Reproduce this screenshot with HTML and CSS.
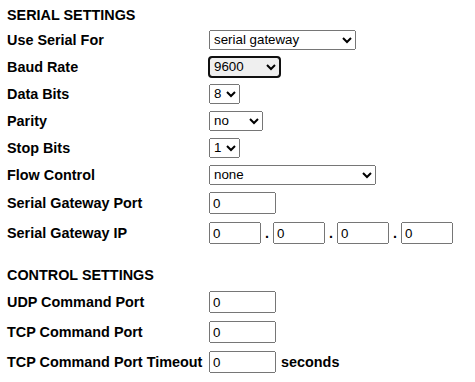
FILE: index.html
```html
<!DOCTYPE html>
<html>
<head>
<meta charset="utf-8">
<link rel="stylesheet" href="styles.css">
</head>
<body>
<form class="page">
  <h2 class="section">SERIAL SETTINGS</h2>
  <div class="row">
    <label class="lbl">Use Serial For</label>
    <select class="sel w-serial"><option>serial gateway</option><option>disabled</option></select>
  </div>
  <div class="row">
    <label class="lbl">Baud Rate</label>
    <select class="sel w-baud focused"><option>9600</option><option>115200</option></select>
  </div>
  <div class="row">
    <label class="lbl">Data Bits</label>
    <select class="sel w-digit"><option>8</option><option>7</option></select>
  </div>
  <div class="row">
    <label class="lbl">Parity</label>
    <select class="sel w-parity"><option>no</option><option>even</option><option>odd</option></select>
  </div>
  <div class="row">
    <label class="lbl">Stop Bits</label>
    <select class="sel w-digit"><option>1</option><option>2</option></select>
  </div>
  <div class="row">
    <label class="lbl">Flow Control</label>
    <select class="sel w-flow"><option>none</option><option>hardware</option></select>
  </div>
  <div class="row tall">
    <label class="lbl">Serial Gateway Port</label>
    <input class="inp w-port" type="text" value="0">
  </div>
  <div class="row tall">
    <label class="lbl">Serial Gateway IP</label>
    <div class="ip">
      <input class="inp w-ip" type="text" value="0"><span class="dot">.</span><input class="inp w-ip" type="text" value="0"><span class="dot">.</span><input class="inp w-ip" type="text" value="0"><span class="dot">.</span><input class="inp w-ip" type="text" value="0">
    </div>
  </div>

  <h2 class="section second">CONTROL SETTINGS</h2>
  <div class="row tall">
    <label class="lbl">UDP Command Port</label>
    <input class="inp w-port" type="text" value="0">
  </div>
  <div class="row tall">
    <label class="lbl">TCP Command Port</label>
    <input class="inp w-port" type="text" value="0">
  </div>
  <div class="row tall">
    <label class="lbl">TCP Command Port Timeout</label>
    <input class="inp w-port" type="text" value="0">
    <span class="unit">seconds</span>
  </div>
</form>
</body>
</html>
```

FILE: styles.css
```css
html, body {
  margin: 0;
  padding: 0;
  background: #ffffff;
}

body {
  font-family: "Liberation Sans", Arial, sans-serif;
  color: #000000;
}

.page {
  padding: 7px 8px 0 7px;
}

.section {
  margin: 0 0 3px 0;
  font-size: 14.4px;
  line-height: 16px;
  font-weight: bold;
}

.section.second {
  margin-top: 19px;
  margin-bottom: 4px;
}

.row {
  display: flex;
  align-items: center;
  height: 27px;
}

.row.tall {
  height: 30px;
}

.lbl {
  width: 202px;
  flex: none;
  font-size: 14.4px;
  font-weight: bold;
  white-space: nowrap;
}

.sel,
.inp {
  font-family: "Liberation Sans", Arial, sans-serif;
  font-size: 13.333px;
  color: #000000;
  box-sizing: border-box;
  margin: 0;
}

.sel {
  height: 20px;
}

.focused {
  outline: 2px solid #101010;
  outline-offset: -1px;
  border-radius: 3px;
}

.w-serial { width: 147px; }
.w-baud { width: 71px; }
.w-digit { width: 31px; }
.w-parity { width: 54px; }
.w-flow { width: 167px; }

.inp {
  height: 22px;
  padding: 1px 2px;
}

.w-port { width: 67px; }
.w-ip { width: 52px; }

.ip {
  display: flex;
  align-items: center;
}

.dot {
  width: 12px;
  text-align: center;
  font-size: 14.4px;
  font-weight: bold;
}

.unit {
  margin-left: 5px;
  font-size: 14.4px;
  font-weight: bold;
}
```
